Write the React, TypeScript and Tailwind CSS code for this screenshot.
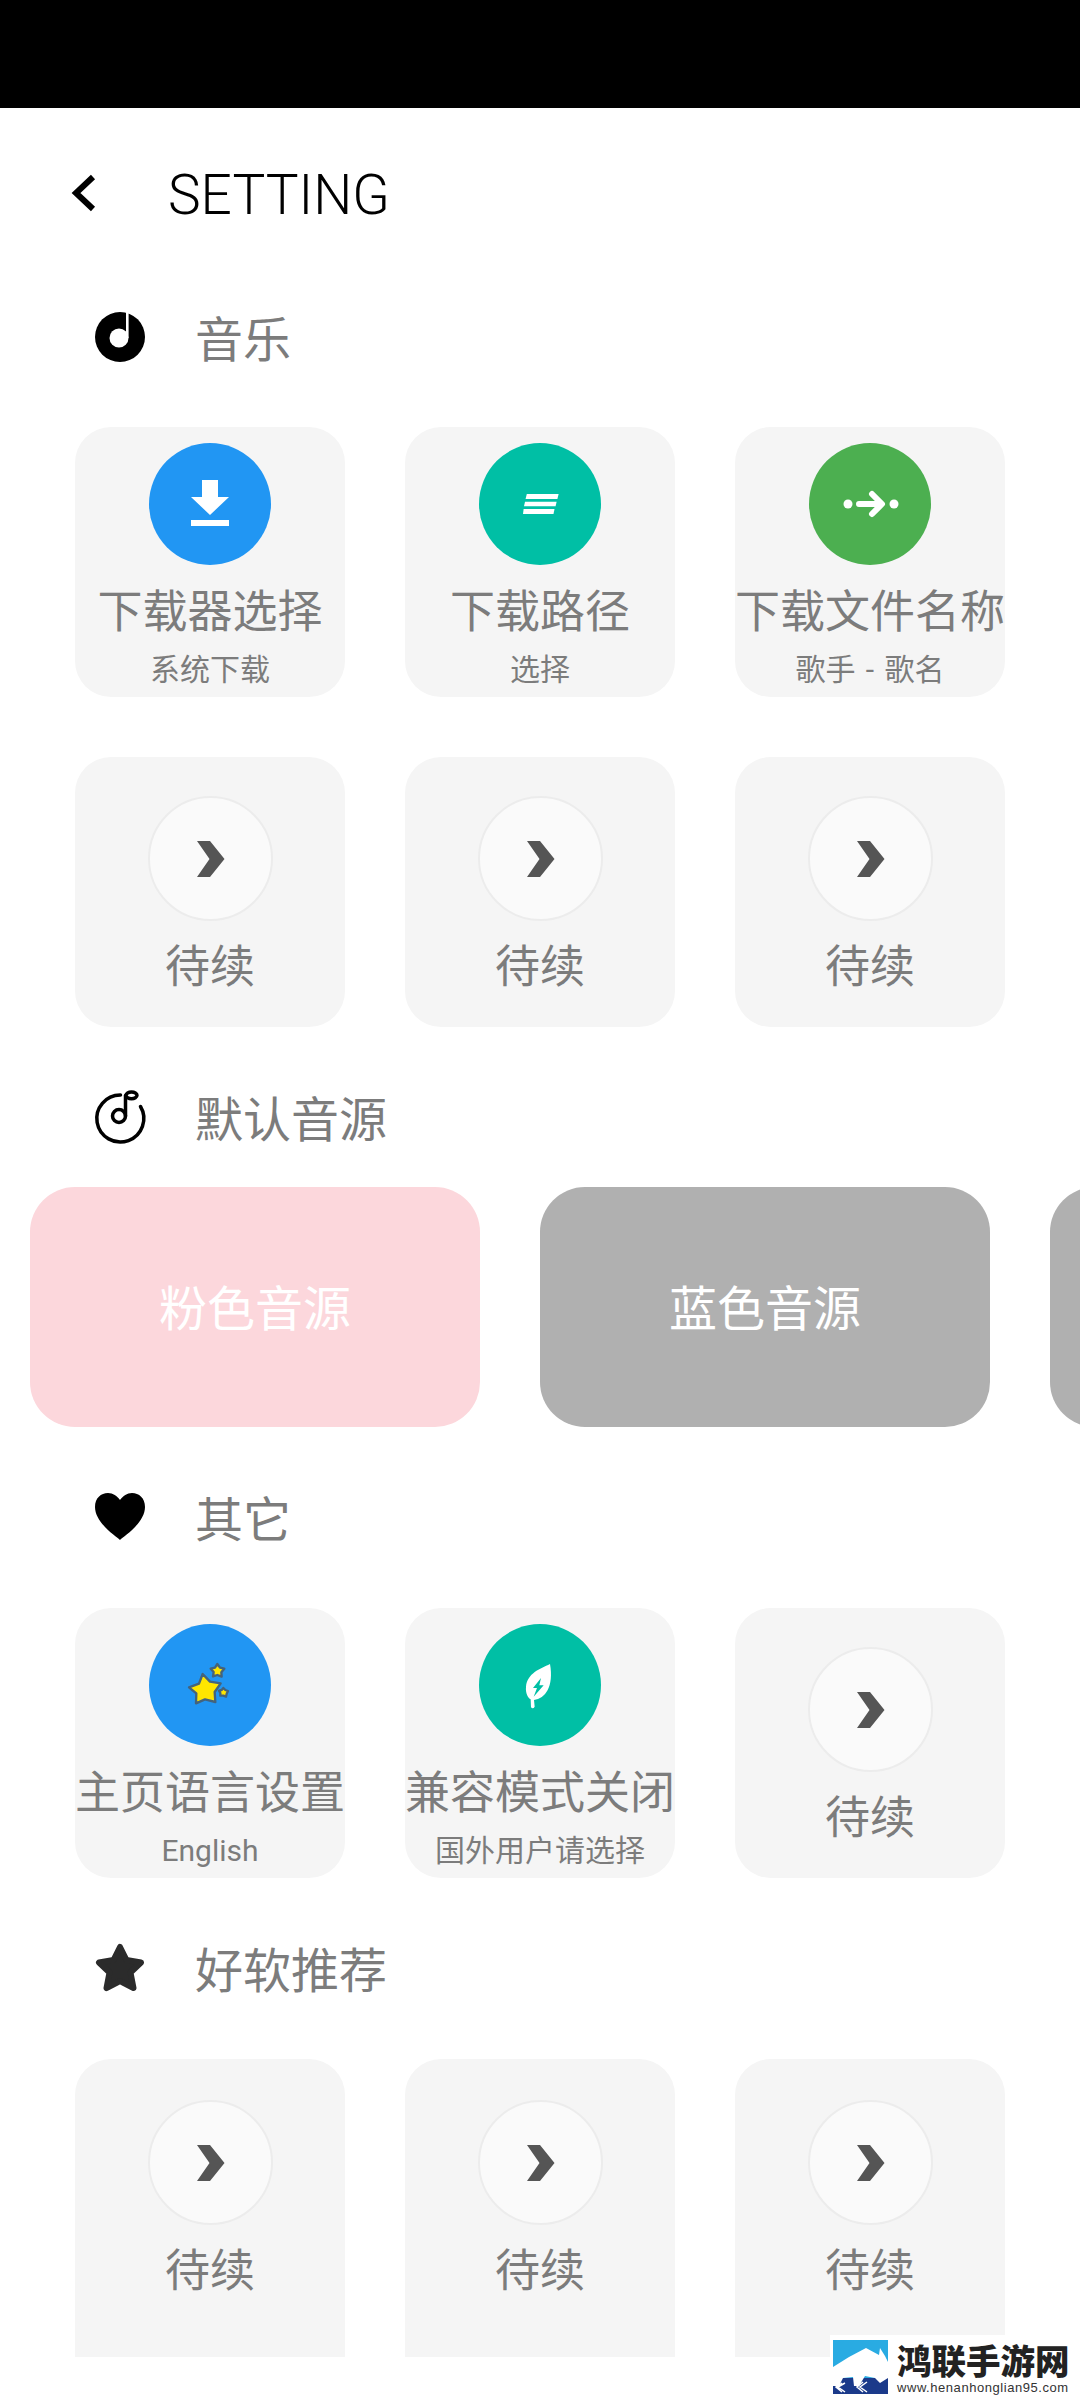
import React from 'react';

type Tool = {
  title: string;
  sub?: string;
  color: string;
  icon: React.ReactNode;
};

const DownloadIcon = () => (
  <svg viewBox="0 0 60 60" className="w-[60px] h-[60px]" fill="#fff">
    <polygon points="22,6 38,6 38,23 49,23 30,41 11,23 22,23" />
    <rect x="11" y="46" width="38" height="6" />
  </svg>
);

const LinesIcon = () => (
  <svg viewBox="0 0 60 60" className="w-[60px] h-[60px]" fill="#fff">
    <polygon points="16.8,20 48.6,20 47.4,25 15.6,25" />
    <polygon points="15,27.7 46.6,27.7 45.6,32.3 14,32.3" />
    <polygon points="13.6,35 44.5,35 43.5,40 13,40" />
  </svg>
);

const RouteIcon = () => (
  <svg viewBox="0 0 60 60" className="w-[60px] h-[60px]" fill="none" stroke="#fff" strokeWidth="6" strokeLinecap="round" strokeLinejoin="round">
    <circle cx="8" cy="30" r="4.5" fill="#fff" stroke="none" />
    <circle cx="54" cy="30" r="4.5" fill="#fff" stroke="none" />
    <path d="M19 30H41M32 20L42 30L32 40" />
  </svg>
);

const StarsIcon = () => (
  <svg viewBox="0 -45 240 240" className="w-[80px] h-[80px]" fill="#ffe600" stroke="#44637c" strokeWidth="7" strokeLinejoin="round">
    <polygon points="98,42 120,65 152,70 134,96 136,126 105,118 78,130 79,100 57,82 87,71" />
    <polygon points="142,12 150,23 163,26 154,37 155,50 142,45 129,49 131,36 122,26 135,23" />
    <polygon points="160,84 166,90 174,93 170,101 168,110 160,107 151,107 151,99 147,92 155,90" />
  </svg>
);

const LeafIcon = () => (
  <svg viewBox="0 -15 240 240" className="w-[80px] h-[80px]">
    <path
      fill="#fff"
      d="M150 42C120 56 82 70 78 110C76 130 84 144 92 148L93 172Q99 178 104 170L102 150C136 146 162 110 150 42Z"
    />
    <polygon fill="#00bfa5" points="123,84 99,114 111,114 101,140 131,106 118,106" />
  </svg>
);

const Chevron = () => (
  <svg viewBox="0 0 40 40" className="w-[40px] h-[40px]" fill="#555555">
    <polygon points="7,2 20,2 34.5,20 20,38 7,38 19.5,20" />
  </svg>
);

const ToolCard = ({ title, sub, color, icon }: Tool) => (
  <div className="w-[270px] h-[270px] shrink-0 rounded-[36px] bg-[#f5f5f5] flex flex-col items-center pt-4">
    <div className={`w-[122px] h-[122px] rounded-full flex items-center justify-center ${color}`}>{icon}</div>
    <div className="mt-[16px] text-[45px] leading-[56px] text-[#7c7c7c] whitespace-nowrap">{title}</div>
    <div className="mt-[13px] font-['Roboto','Noto_Sans_CJK_SC',sans-serif] text-[30px] leading-[40px] text-[#7c7c7c] whitespace-nowrap [word-spacing:3px]">{sub}</div>
  </div>
);

// the last row runs on under the bottom edge, so it has no lower corners
const PendingCard = ({ tall = false }: { tall?: boolean }) => (
  <div
    className={
      tall
        ? 'w-[270px] h-[340px] shrink-0 rounded-[36px] bg-[#f5f5f5] flex flex-col items-center pt-[41px]'
        : 'w-[270px] h-[270px] shrink-0 rounded-[36px] bg-[#f5f5f5] flex flex-col items-center pt-[39px]'
    }
  >
    <div className="w-[125px] h-[125px] rounded-full bg-[#fafafa] border-2 border-[#ececec] flex items-center justify-center">
      <Chevron />
    </div>
    <div className="mt-[15px] text-[45px] leading-[56px] text-[#7c7c7c]">待续</div>
  </div>
);

const SectionTitle = ({ icon, label }: { icon: React.ReactNode; label: string }) => (
  <div className="h-[100px] mt-10 pl-[95px] flex items-center">
    <div className="w-[50px] h-[50px] shrink-0 flex items-center justify-center">{icon}</div>
    <div className="ml-[50px] -mt-[2px] text-[48px] leading-[60px] text-[#7c7c7c]">{label}</div>
  </div>
);

const CardRow = ({ children, className = '' }: { children: React.ReactNode; className?: string }) => (
  <div className={`flex gap-[60px] pl-[75px] ${className}`}>{children}</div>
);

export default function App() {
  return (
    <div className="relative w-[1080px] h-[2400px] overflow-hidden bg-white font-['Noto_Sans_CJK_SC',sans-serif]">
      <div className="h-[108px] bg-black" />

      <div className="h-[2249px] overflow-hidden">
        <div className="h-[170px] flex items-center pl-[70px]">
          <svg viewBox="0 0 30 40" className="w-[30px] h-[40px]" fill="none" stroke="#000" strokeWidth="6">
            <polyline points="23,4 6,20 23,36" />
          </svg>
          <div className="ml-[68px] mt-[4px] font-['Roboto',sans-serif] font-light text-[55px] leading-[70px] text-black">SETTING</div>
        </div>

        <div className="-mt-[31px]">
          <SectionTitle
            label="音乐"
            icon={
              <svg viewBox="0 0 50 50" className="w-[50px] h-[50px]">
                <circle cx="25" cy="25" r="25" fill="#000" />
                <circle cx="24" cy="26" r="9.5" fill="#fff" />
                <rect x="31" y="0" width="2.6" height="26" fill="#fff" />
              </svg>
            }
          />
        </div>
        <CardRow className="mt-10">
          <ToolCard title="下载器选择" sub="系统下载" color="bg-[#2196f3]" icon={<DownloadIcon />} />
          <ToolCard title="下载路径" sub="选择" color="bg-[#00bfa5]" icon={<LinesIcon />} />
          <ToolCard title="下载文件名称" sub="歌手 - 歌名" color="bg-[#4caf50]" icon={<RouteIcon />} />
        </CardRow>
        <CardRow className="mt-[60px]">
          <PendingCard />
          <PendingCard />
          <PendingCard />
        </CardRow>

        <SectionTitle
          label="默认音源"
          icon={
            <svg viewBox="5.5 3.5 60 60" className="w-[60px] h-[60px] shrink-0" fill="none" stroke="#000" strokeWidth="3.5" strokeLinecap="round">
              <path d="M36 11.5A23.5 23.5 0 1 0 56 23" />
              <circle cx="34.5" cy="32.5" r="6.5" />
              <path d="M41 32.5V12" />
              <ellipse cx="47" cy="11.8" rx="5.5" ry="3.4" />
            </svg>
          }
        />
        <div className="mt-5 flex gap-[60px] pl-[30px]">
          <div className="w-[450px] h-[240px] shrink-0 rounded-[45px] bg-[#fcd7dc] flex items-center justify-center pb-1 text-[48px] text-white">粉色音源</div>
          <div className="w-[450px] h-[240px] shrink-0 rounded-[45px] bg-[#b0b0b0] flex items-center justify-center pb-1 text-[48px] text-white">蓝色音源</div>
          <div className="w-[450px] h-[240px] shrink-0 rounded-[45px] bg-[#b0b0b0]" />
        </div>

        <SectionTitle
          label="其它"
          icon={
            <svg viewBox="0 0 50 48" className="w-[50px] h-[48px]" fill="#000">
              <path d="M25 47C22 44 0 30 0 14C0 5 6 0 13 0C18 0 22 3 25 7C28 3 32 0 37 0C44 0 50 5 50 14C50 30 28 44 25 47Z" />
            </svg>
          }
        />
        <CardRow className="mt-[41px]">
          <ToolCard title="主页语言设置" sub="English" color="bg-[#2196f3]" icon={<StarsIcon />} />
          <ToolCard title="兼容模式关闭" sub="国外用户请选择" color="bg-[#00bfa5]" icon={<LeafIcon />} />
          <PendingCard />
        </CardRow>

        <SectionTitle
          label="好软推荐"
          icon={
            <svg viewBox="0 0 50 50" className="w-[50px] h-[50px]" fill="#2b2b2b" stroke="#2b2b2b" strokeWidth="6" strokeLinejoin="round">
              <polygon points="25,4 31.5,17 46,19.5 35.5,29.5 38.5,45 25,38 11.5,45 14.5,29.5 4,19.5 18.5,17" />
            </svg>
          }
        />
        <CardRow className="mt-[41px]">
          <PendingCard tall />
          <PendingCard tall />
          <PendingCard tall />
        </CardRow>
      </div>

      {/* watermark over the bottom corner */}
      <div className="absolute right-0 bottom-0 w-[250px] h-[65px] bg-white">
        <svg viewBox="0 0 55 54" className="absolute left-[3px] top-[5px] w-[55px] h-[54px]">
          <rect width="55" height="54" fill="#29abe2" />
          <rect y="38" width="55" height="16" fill="#1b3a8a" />
          <path d="M0 27L16 17L33 8L46 15L47 8L52 16L55 22V38L47 43L42 38L32 36L26 46H21L20 37L10 38L6 46H0Z" fill="#fff" />
          <path d="M12 43L5 47L12 52M9 43L3 47L9 52M34 42L27 47L34 52M30 42L24 47L30 52" fill="none" stroke="#fff" strokeWidth="1.5" />
        </svg>
        <div className="absolute left-[67px] top-[5px] text-[34.5px] leading-[38px] font-black text-[#222222] whitespace-nowrap">鸿联手游网</div>
        <div className="absolute left-[67px] top-[45px] font-['Liberation_Sans',sans-serif] text-[13px] leading-[16px] tracking-[0.55px] text-[#333333] whitespace-nowrap">www.henanhonglian95.com</div>
      </div>
    </div>
  );
}
